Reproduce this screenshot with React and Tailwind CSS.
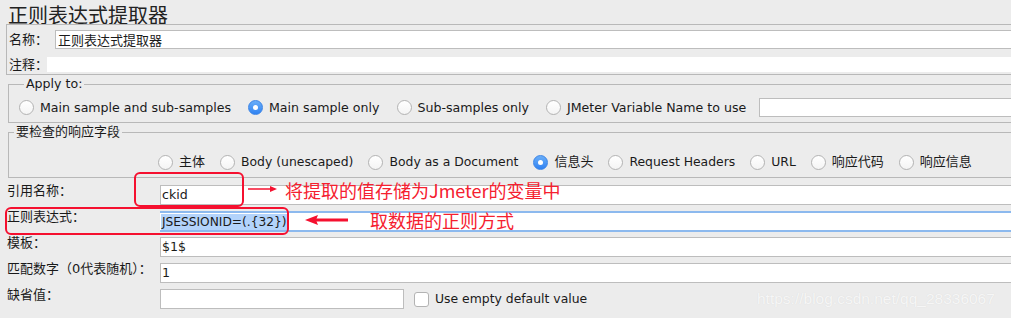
import React from "react";

function Radio({ checked }) {
  return checked ? (
    <span className="w-[15px] h-[15px] rounded-full bg-gradient-to-b from-[#6aaef8] to-[#2f82f2] border border-[#3b84e6] flex items-center justify-center shrink-0">
      <span className="w-[5px] h-[5px] rounded-full bg-white" />
    </span>
  ) : (
    <span className="w-[15px] h-[15px] rounded-full bg-gradient-to-b from-white to-[#f4f4f4] border border-[#b3b3b3] shrink-0" />
  );
}

function RadioItem({ checked, label, size }) {
  return (
    <div className="flex items-center gap-[6px] h-[16px]">
      <Radio checked={checked} />
      <span className={"whitespace-nowrap leading-[16px] " + (size || "text-[13px]")}>{label}</span>
    </div>
  );
}

function FormRow({ label, children, first }) {
  return (
    <div className={"flex items-start h-[20px] " + (first ? "" : "mt-[6px]")}>
      <div className="w-[160px] shrink-0 pl-[7px] leading-[16px] whitespace-nowrap -mt-[2px]">{label}</div>
      {children}
    </div>
  );
}

export default function App() {
  const a = "text-[12.6px]";
  const b = "text-[12.4px]";
  return (
    <div className="relative w-[1011px] h-[318px] overflow-hidden bg-[#ececec] text-[13px] text-[#1a1a1a] font-['DejaVu_Sans','Noto_Sans_CJK_SC',sans-serif]">
      <div className="w-[1060px] flex flex-col">
        <div className="h-[24px] pl-[8px] text-[20px] leading-[29px] font-['Noto_Sans_CJK_SC',sans-serif] text-[#222] whitespace-nowrap">
          正则表达式提取器
        </div>
        {/* name / comment panel */}
        <div className="ml-[6px] border border-[#b8b8b8] pt-[5px] pb-[2px] flex flex-col">
          <div className="flex items-center h-[19px]">
            <div className="w-[48px] shrink-0 pl-[2px] leading-[16px] whitespace-nowrap">名称：</div>
            <div className="flex-1 h-[19px] bg-white border border-[#bdbdbd] pl-[2px] leading-[17px] font-['Noto_Sans_CJK_SC',sans-serif]">
              正则表达式提取器
            </div>
          </div>
          <div className="flex items-center h-[15px] mt-[8px]">
            <div className="w-[40px] shrink-0 pl-[2px] leading-[16px] whitespace-nowrap">注释：</div>
            <div className="flex-1 h-[15px] bg-white" />
          </div>
        </div>
        {/* Apply to */}
        <fieldset className="ml-[8px] mt-[1px] border border-[#b8b8b8] pl-[10px] pb-[5px]">
          <legend className="ml-[5px] px-[2px] leading-[16px] text-[12.6px]">Apply to:</legend>
          <div className="flex items-center gap-[17px] pt-[6px] h-[25px]">
            <RadioItem size={a} label="Main sample and sub-samples" />
            <RadioItem size={a} checked label="Main sample only" />
            <RadioItem size={a} label="Sub-samples only" />
            <RadioItem size={a} label="JMeter Variable Name to use" />
            <div className="flex-1 h-[19px] bg-white border border-[#bdbdbd] -ml-[4px]" />
          </div>
        </fieldset>
        {/* response fields */}
        <fieldset className="ml-[8px] mt-[1px] border border-[#b8b8b8] pt-[14px] pb-[7px]">
          <legend className="ml-[5px] px-[2px] leading-[16px]">要检查的响应字段</legend>
          <div className="flex items-center gap-[15px] pl-[149px]">
            <RadioItem label="主体" />
            <RadioItem size={b} label="Body (unescaped)" />
            <RadioItem size={b} label="Body as a Document" />
            <RadioItem checked label="信息头" />
            <RadioItem size={b} label="Request Headers" />
            <RadioItem size={b} label="URL" />
            <RadioItem label="响应代码" />
            <RadioItem label="响应信息" />
          </div>
        </fieldset>
        {/* form rows */}
        <div className="flex flex-col mt-[7px]">
          <FormRow first label="引用名称：">
            <div className="flex-1 h-[20px] bg-white border border-[#bdbdbd] pl-[1px] leading-[18px] text-[12.6px]">ckid</div>
          </FormRow>
          <FormRow label="正则表达式：">
            <div className="flex-1 h-[21px] bg-white border-y-2 border-[#8cb9ee] pl-[1px] flex items-center">
              <span className="bg-[#b3d3fb] leading-[16px] px-[1px] text-[12.2px]">JSESSIONID=(.{"{"}32{"}"})</span>
            </div>
          </FormRow>
          <FormRow label="模板：">
            <div className="flex-1 h-[20px] bg-white border border-[#bdbdbd] pl-[1px] leading-[18px] text-[12.6px]">$1$</div>
          </FormRow>
          <FormRow label="匹配数字（0代表随机）：">
            <div className="flex-1 h-[20px] bg-white border border-[#bdbdbd] pl-[1px] leading-[18px] text-[12.6px]">1</div>
          </FormRow>
          <FormRow label="缺省值：">
            <div className="w-[244px] h-[20px] bg-white border border-[#bdbdbd]" />
            <div className="flex items-center gap-[6px] ml-[10px] mt-[2px]">
              <span className="w-[15px] h-[15px] rounded-[3px] bg-white border border-[#b3b3b3]" />
              <span className="leading-[16px] whitespace-nowrap text-[12.4px]">Use empty default value</span>
            </div>
          </FormRow>
        </div>
      </div>

      {/* annotations */}
      <div className="absolute left-[134px] top-[172px] w-[110px] h-[35px] border-2 border-[#f5102f] rounded-[6px]" />
      <div className="absolute left-[5px] top-[207px] w-[284px] h-[28px] border-2 border-[#f5102f] rounded-[6px]" />
      <svg className="absolute left-[246px] top-[184px]" width="34" height="10" viewBox="0 0 34 10">
        <line x1="2" y1="5" x2="26" y2="5" stroke="#f5102f" strokeWidth="1.5" />
        <path d="M24 2 L31 5 L24 8 Z" fill="#f5102f" />
      </svg>
      <svg className="absolute left-[304px] top-[214px]" width="46" height="12" viewBox="0 0 46 12">
        <line x1="10" y1="6" x2="44" y2="6" stroke="#f5102f" strokeWidth="3" />
        <path d="M1 6 L14 1 L12 6 L14 11 Z" fill="#f5102f" />
      </svg>
      <div className="absolute left-[285px] top-[178px] text-[18px] leading-[24px] text-[#f5202f] whitespace-nowrap font-['Noto_Sans_CJK_SC',sans-serif]">
        将提取的值存储为Jmeter的变量中
      </div>
      <div className="absolute left-[370px] top-[208px] text-[18px] leading-[24px] text-[#f5202f] whitespace-nowrap font-['Noto_Sans_CJK_SC',sans-serif]">
        取数据的正则方式
      </div>
      <div className="absolute left-[757px] top-[287px] text-[15.5px] leading-[24px] text-[#f6f6f6] whitespace-nowrap font-['Liberation_Sans',sans-serif] [text-shadow:0_0_1px_#d8d8d8]">
        https://blog.csdn.net/qq_28336067
      </div>
    </div>
  );
}
